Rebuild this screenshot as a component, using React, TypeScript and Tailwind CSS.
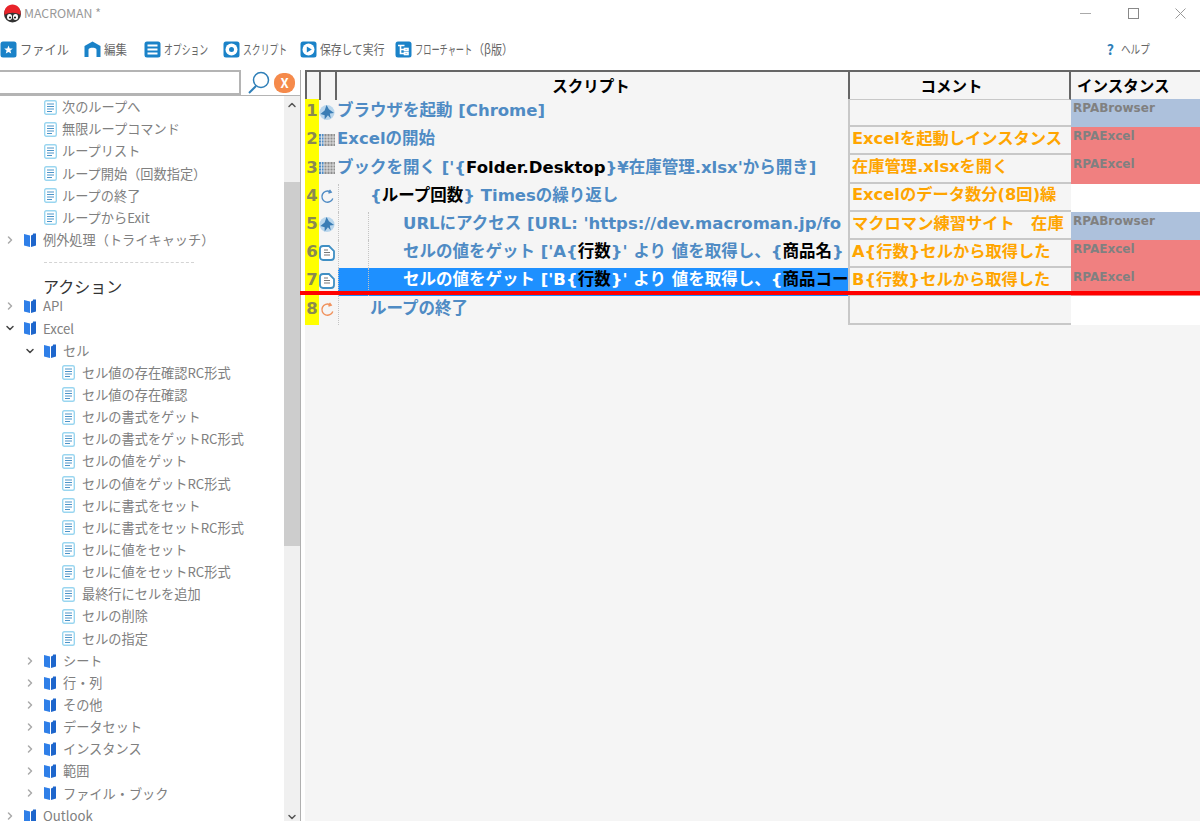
import { ChevronDown, ChevronRight, ChevronUp } from "lucide-react";

const uiFont = "font-['Noto_Sans_CJK_JP','Noto_Sans',sans-serif]";
const gridFont = "font-['DejaVu_Sans','Noto_Sans_CJK_JP',sans-serif]";
const gridCols = "grid-cols-[14px_16px_513px_223px_129px]";

function Logo() {
  return (
    <svg width="19" height="19" viewBox="0 0 19 19">
      <circle cx="9.5" cy="10" r="8.5" fill="#333" />
      <path d="M1.5 11C0.5 4 5 0.5 9.5 0.5S18.500 4 17.500 11C13 8 6 8 1.500 11Z" fill="#e8232a" />
      <ellipse cx="6.500" cy="13" rx="2.500" ry="3" fill="#fff" />
      <ellipse cx="12.500" cy="13" rx="2.500" ry="3" fill="#fff" />
      <circle cx="7" cy="13.500" r="1.100" fill="#222" />
      <circle cx="12" cy="13.500" r="1.100" fill="#222" />
    </svg>
  );
}

function ToolIcon({ kind }: { kind: string }) {
  return (
    <svg width="17" height="17" viewBox="0 0 17 17" className="shrink-0">
      {kind === "house" ? (
        <path d="M0.5 16V5L8.5 0.5L16.5 5V16H12.500V8.500C12.500 6 4.500 6 4.500 8.500V16Z" fill="#1a82c8" />
      ) : (
        <rect x="0.5" y="0.5" width="16" height="16" rx="2.5" fill="#1a82c8" />
      )}
      {kind === "star" && <path d="M8.5 4.5L9.7 7.4L12.8 7.6L10.4 9.6L11.2 12.6L8.5 11L5.8 12.6L6.6 9.6L4.2 7.6L7.3 7.4Z" fill="#fff" />}
      {kind === "list" && <path d="M3.5 4.5H13.5M3.5 8.5H13.5M3.5 12.5H13.5" stroke="#fff" strokeWidth="1.8" />}
      {kind === "disc" && (
        <>
          <circle cx="8.5" cy="8.5" r="6" fill="#fff" />
          <circle cx="8.5" cy="8.5" r="2.5" fill="#1a82c8" />
        </>
      )}
      {kind === "play" && (
        <>
          <circle cx="8.5" cy="8.5" r="6" fill="#fff" />
          <path d="M6.8 5.5L11.8 8.5L6.8 11.5Z" fill="#1a82c8" />
        </>
      )}
      {kind === "flow" && (
        <g fill="none" stroke="#fff" strokeWidth="1.6">
          <path d="M3 4.500H9.500M5.500 4.500V12.500H9M5.500 8.500H9" />
          <rect x="9.500" y="7.500" width="3.500" height="2" />
          <rect x="9.500" y="11.500" width="3.500" height="2" />
        </g>
      )}
    </svg>
  );
}

const tools = [
  { icon: "star", label: "ファイル", width: "w-[84px]", scale: "scale-x-[0.94]" },
  { icon: "house", label: "編集", width: "w-[60px]", scale: "scale-x-[0.88]" },
  { icon: "list", label: "オプション", width: "w-[79px]", scale: "scale-x-[0.68]" },
  { icon: "disc", label: "スクリプト", width: "w-[77px]", scale: "scale-x-[0.68]" },
  { icon: "play", label: "保存して実行", width: "w-[95px]", scale: "scale-x-[0.83]" },
];

function Folder() {
  return (
    <svg width="12" height="14" viewBox="0 0 12 14" className="shrink-0">
      <path d="M0 1L6 2.5V14L0 12.5Z" fill="#2f7fe8" />
      <path d="M7 2.5L9 1.5V0.5H12V12.5L7 14Z" fill="#1e66cc" />
    </svg>
  );
}

function Doc() {
  return (
    <svg width="13" height="15" viewBox="0 0 13 15" className="shrink-0">
      <rect x="0.7" y="0.7" width="11.6" height="13.6" rx="1.5" fill="#fff" stroke="#9ad6f0" strokeWidth="1.4" />
      <path d="M3 4H10M3 6.5H10M3 9H10M3 11.5H8" stroke="#4d94c8" strokeWidth="1" />
    </svg>
  );
}

type TreeItem =
  | { t: "doc"; level: 0 | 1; label: string }
  | { t: "folder"; level: 0 | 1; label: string; open?: boolean }
  | { t: "rule" }
  | { t: "head"; label: string };

const tree: TreeItem[] = [
  { t: "doc", level: 0, label: "次のループへ" },
  { t: "doc", level: 0, label: "無限ループコマンド" },
  { t: "doc", level: 0, label: "ループリスト" },
  { t: "doc", level: 0, label: "ループ開始（回数指定）" },
  { t: "doc", level: 0, label: "ループの終了" },
  { t: "doc", level: 0, label: "ループからExit" },
  { t: "folder", level: 0, label: "例外処理（トライキャッチ）" },
  { t: "rule" },
  { t: "head", label: "アクション" },
  { t: "folder", level: 0, label: "API" },
  { t: "folder", level: 0, label: "Excel", open: true },
  { t: "folder", level: 1, label: "セル", open: true },
  { t: "doc", level: 1, label: "セル値の存在確認RC形式" },
  { t: "doc", level: 1, label: "セル値の存在確認" },
  { t: "doc", level: 1, label: "セルの書式をゲット" },
  { t: "doc", level: 1, label: "セルの書式をゲットRC形式" },
  { t: "doc", level: 1, label: "セルの値をゲット" },
  { t: "doc", level: 1, label: "セルの値をゲットRC形式" },
  { t: "doc", level: 1, label: "セルに書式をセット" },
  { t: "doc", level: 1, label: "セルに書式をセットRC形式" },
  { t: "doc", level: 1, label: "セルに値をセット" },
  { t: "doc", level: 1, label: "セルに値をセットRC形式" },
  { t: "doc", level: 1, label: "最終行にセルを追加" },
  { t: "doc", level: 1, label: "セルの削除" },
  { t: "doc", level: 1, label: "セルの指定" },
  { t: "folder", level: 1, label: "シート" },
  { t: "folder", level: 1, label: "行・列" },
  { t: "folder", level: 1, label: "その他" },
  { t: "folder", level: 1, label: "データセット" },
  { t: "folder", level: 1, label: "インスタンス" },
  { t: "folder", level: 1, label: "範囲" },
  { t: "folder", level: 1, label: "ファイル・ブック" },
  { t: "folder", level: 0, label: "Outlook" },
];

function TreeRow({ item }: { item: TreeItem }) {
  const rowCls = "flex h-[22.15px] shrink-0 items-center whitespace-nowrap";
  if (item.t === "rule") {
    return (
      <div className={rowCls + " pl-[44px]"}>
        <div className="w-[150px] border-t border-dashed border-[#d4d4d4]" />
      </div>
    );
  }
  if (item.t === "head") {
    return (
      <div className={rowCls + " pl-[43px] pt-[3px] text-[16px] text-[#333]"}>{item.label}</div>
    );
  }
  if (item.t === "folder") {
    return (
      <div className={rowCls + (item.level === 1 ? " pl-[24px]" : " pl-[4px]")}>
        <span className="flex w-[20px] shrink-0">
          {item.open ? (
            <ChevronDown size={12} strokeWidth={3} className="text-[#444]" />
          ) : (
            <ChevronRight size={12} strokeWidth={3} className="text-[#aaa]" />
          )}
        </span>
        <Folder />
        <span className="pl-[7px]">{item.label}</span>
      </div>
    );
  }
  return (
    <div className={rowCls + (item.level === 1 ? " pl-[62px]" : " pl-[44px]")}>
      <Doc />
      <span className={item.level === 1 ? "pl-[7px]" : "pl-[5px]"}>{item.label}</span>
    </div>
  );
}

function GlobeIcon() {
  return (
    <svg width="17" height="17" viewBox="0 0 17 17">
      <circle cx="8.5" cy="8.5" r="8" fill="#b9d6ec" />
      <path d="M8 0.500L10.500 5L16 9L11.500 9.500L12.500 15L9.500 11.500L6 16L6 11.500L1.500 10L6 6.500Z" fill="#3a7db5" />
    </svg>
  );
}

function GridIcon() {
  return (
    <svg width="16" height="14" viewBox="0 0 16 14">
      <rect x="0" y="1" width="16" height="12" fill="#8f8f8f" />
      <rect x="0" y="1" width="5" height="12" fill="#4f8bc4" />
      <path d="M0 4H16M0 7H16M0 10H16M2.500 1V13M5 1V13M8 1V13M11 1V13M14 1V13" stroke="#eeeeee" strokeWidth="0.8" />
    </svg>
  );
}

function LoopIcon({ color }: { color: string }) {
  return (
    <svg width="15" height="15" viewBox="0 0 15 15" fill="none" stroke={color} strokeWidth="1.4">
      <path d="M12.800 9.500A5.600 5.600 0 1 1 10 2.600" />
      <path d="M9.500 0.800L11.200 3.200L8.400 4" />
    </svg>
  );
}

function RowDoc() {
  return (
    <svg width="16" height="16" viewBox="0 0 16 16">
      <path d="M4 1H10L15 6V12A3 3 0 0 1 12 15H4A3 3 0 0 1 1 12V4A3 3 0 0 1 4 1Z" fill="#fff" stroke="#3f8fc4" strokeWidth="1.800" />
      <path d="M5 5H9M5 7.500H11M5 10H11" stroke="#777" strokeWidth="1" />
    </svg>
  );
}

type Row = {
  icon: "globe" | "grid" | "loop" | "doc" | "end";
  indent: 0 | 1 | 2;
  script: [string, boolean][];
  comment: string;
  inst: "" | "RPABrowser" | "RPAExcel";
  selected?: boolean;
};

const rows: Row[] = [
  { icon: "globe", indent: 0, script: [["ブラウザを起動 [Chrome]", false]], comment: "", inst: "RPABrowser" },
  { icon: "grid", indent: 0, script: [["Excelの開始", false]], comment: "Excelを起動しインスタンス", inst: "RPAExcel" },
  {
    icon: "grid",
    indent: 0,
    script: [["ブックを開く ['{", false], ["Folder.Desktop", true], ["}¥在庫管理.xlsx'から開き]", false]],
    comment: "在庫管理.xlsxを開く",
    inst: "RPAExcel",
  },
  {
    icon: "loop",
    indent: 1,
    script: [["{", false], ["ループ回数", true], ["} Timesの繰り返し", false]],
    comment: "Excelのデータ数分(8回)繰",
    inst: "",
  },
  {
    icon: "globe",
    indent: 2,
    script: [["URLにアクセス [URL: 'https://dev.macroman.jp/fo", false]],
    comment: "マクロマン練習サイト　在庫",
    inst: "RPABrowser",
  },
  {
    icon: "doc",
    indent: 2,
    script: [["セルの値をゲット ['A{", false], ["行数", true], ["}' より 値を取得し、{", false], ["商品名", true], ["}", false]],
    comment: "A{行数}セルから取得した",
    inst: "RPAExcel",
  },
  {
    icon: "doc",
    indent: 2,
    script: [["セルの値をゲット ['B{", false], ["行数", true], ["}' より 値を取得し、{", false], ["商品コー", true]],
    comment: "B{行数}セルから取得した",
    inst: "RPAExcel",
    selected: true,
  },
  { icon: "end", indent: 1, script: [["ループの終了", false]], comment: "", inst: "" },
];

const instBg = { "": "bg-white", RPABrowser: "bg-[#adc1dc]", RPAExcel: "bg-[#f08080]" };
const indentPad = ["pl-[2px]", "pl-[35px]", "pl-[68px]"];

function RowIcon({ icon }: { icon: Row["icon"] }) {
  if (icon === "globe") return <GlobeIcon />;
  if (icon === "grid") return <GridIcon />;
  if (icon === "loop") return <LoopIcon color="#4f8bc4" />;
  if (icon === "doc") return <RowDoc />;
  return <LoopIcon color="#f0905a" />;
}

function ScriptRow({ row, n }: { row: Row; n: number }) {
  return (
    <div className={"grid h-[28.2px] text-[16.5px] font-bold " + gridCols}>
      <div className="flex items-center justify-center bg-[#ffff00] pb-[3px] text-[#8a8a50]">{n}</div>
      <div className="flex items-center justify-center pb-[2px]">
        <RowIcon icon={row.icon} />
      </div>
      <div
        className={
          "relative flex items-center overflow-hidden whitespace-nowrap pb-[3px] " +
          indentPad[row.indent] +
          (row.selected ? " text-white" : " text-[#4f8bc4]")
        }
      >
        {row.selected && <div className="absolute inset-y-0 left-[3px] right-0 bg-[#1e90ff]" />}
        {row.indent > 0 && <div className="absolute left-[3px] top-0 h-full border-l border-dotted border-[#c4c4c4]" />}
        {row.indent > 1 && <div className="absolute left-[33px] top-0 h-full border-l border-dotted border-[#c4c4c4]" />}
        {row.script.map(([text, dark], i) => (
          <span key={i} className={"relative " + (dark ? "text-black" : "")}>
            {text}
          </span>
        ))}
      </div>
      <div className="flex items-center overflow-hidden whitespace-nowrap border-b-2 border-l-2 border-[#c8c8c8] pb-[2px] pl-[2px] text-[16.3px] text-[#ffa500]">
        {row.comment}
      </div>
      <div className={"overflow-hidden pl-[2px] text-[12px] leading-[19px] text-[#808080] " + instBg[row.inst]}>
        {row.inst}
      </div>
    </div>
  );
}

export default function App() {
  return (
    <div className={"relative flex h-[821px] w-[1200px] flex-col overflow-hidden bg-white " + uiFont}>
      {/* title bar */}
      <div className="flex h-[26px] shrink-0 items-center pl-[3px] text-[12.3px] text-[#999]">
        <Logo />
        <span className="pl-[2px]">MACROMAN *</span>
        <div className="ml-auto flex items-center gap-[36px] pr-[14px]">
          <svg width="11" height="11" viewBox="0 0 11 11" className="mr-[1px]">
            <path d="M0 5.5H11" stroke="#aaa" />
          </svg>
          <svg width="11" height="11" viewBox="0 0 11 11">
            <rect x="0.5" y="0.5" width="10" height="10" fill="none" stroke="#888" />
          </svg>
          <svg width="11" height="11" viewBox="0 0 11 11">
            <path d="M0.5 0.5L10.5 10.5M10.5 0.5L0.5 10.5" stroke="#999" />
          </svg>
        </div>
      </div>

      {/* toolbar */}
      <div className="flex h-[44px] shrink-0 items-center pt-[2px] text-[13px] text-[#666]">
        {tools.map((tool) => (
          <div key={tool.label} className={"flex shrink-0 items-center gap-[3px] whitespace-nowrap " + tool.width}>
            <ToolIcon kind={tool.icon} />
            <span className={"origin-left " + tool.scale}>{tool.label}</span>
          </div>
        ))}
        <div className="flex shrink-0 items-center gap-[3px] whitespace-nowrap">
          <ToolIcon kind="flow" />
          <span className="w-[55px] origin-left scale-x-[0.63]">フローチャート</span>
          <span className="w-[40px] origin-left scale-x-[0.85]">（β版）</span>
        </div>
        <div className="ml-auto flex items-center gap-[7px] whitespace-nowrap pr-[48px] text-[12px]">
          <span className="text-[14px] font-bold text-[#2f7fb8]">?</span>
          <span className="w-[31px] origin-left scale-x-[0.8]">ヘルプ</span>
        </div>
      </div>

      {/* body */}
      <div className="flex min-h-0 flex-1">
        <div className="flex w-[301px] shrink-0 flex-col border-r border-[#b0b0b0]">
          <div className="flex h-[25px] shrink-0 items-center">
            <div className="h-[25px] w-[241px] border-2 border-l-0 border-[#b4b4b4]" />
            <svg width="26" height="24" viewBox="0 0 26 24" className="ml-[5px]" fill="none" stroke="#2f7fb8" strokeWidth="1.5">
              <circle cx="15" cy="9" r="7.5" />
              <path d="M10 15L3 22" strokeWidth="2" />
            </svg>
            <div className="ml-[2px] flex h-[20px] w-[21px] items-center justify-center rounded-[9px] bg-[#f58a4b] text-[13px] font-bold leading-none text-white">
              X
            </div>
          </div>
          <div className="flex min-h-0 flex-1 border-t border-[#b4b4b4]">
            <div className="flex w-[284px] shrink-0 flex-col overflow-hidden text-[13.2px] text-[#808080]">
              {tree.map((item, i) => (
                <TreeRow key={i} item={item} />
              ))}
            </div>
            <div className="flex w-[16px] shrink-0 flex-col bg-[#f0f0f0]">
              <div className="flex h-[18px] shrink-0 items-center justify-center">
                <ChevronUp size={12} strokeWidth={3} className="text-[#555]" />
              </div>
              <div className="mt-[68px] h-[364px] shrink-0 bg-[#cdcdcd]" />
              <div className="mt-auto flex h-[8px] shrink-0 items-center justify-center">
                <ChevronDown size={12} strokeWidth={3} className="text-[#555]" />
              </div>
            </div>
          </div>
        </div>

        <div className="ml-[4px] flex min-w-0 flex-1 flex-col bg-[#f5f5f5]">
          <div className={"grid h-[29px] shrink-0 border-t-2 border-[#666] text-[15.5px] font-bold text-black " + gridCols}>
            <div className="border-l-2 border-[#666]" />
            <div className="border-l-2 border-[#666]" />
            <div className="border-l-2 border-[#666] pr-[3px] text-center leading-[27px]">スクリプト</div>
            <div className="border-x-2 border-b border-[#666] border-b-[#c8c8c8] pr-[16px] text-center leading-[27px]">コメント</div>
            <div className="pl-[6px] leading-[27px]">インスタンス</div>
          </div>
          <div className={"flex flex-col " + gridFont}>
            {rows.map((row, i) => (
              <ScriptRow key={i} row={row} n={i + 1} />
            ))}
          </div>
        </div>
      </div>

      {/* drop marker across the script grid */}
      <div className="absolute left-[300px] top-[291px] h-[4px] w-[900px] bg-[#ff0000]" />
    </div>
  );
}
